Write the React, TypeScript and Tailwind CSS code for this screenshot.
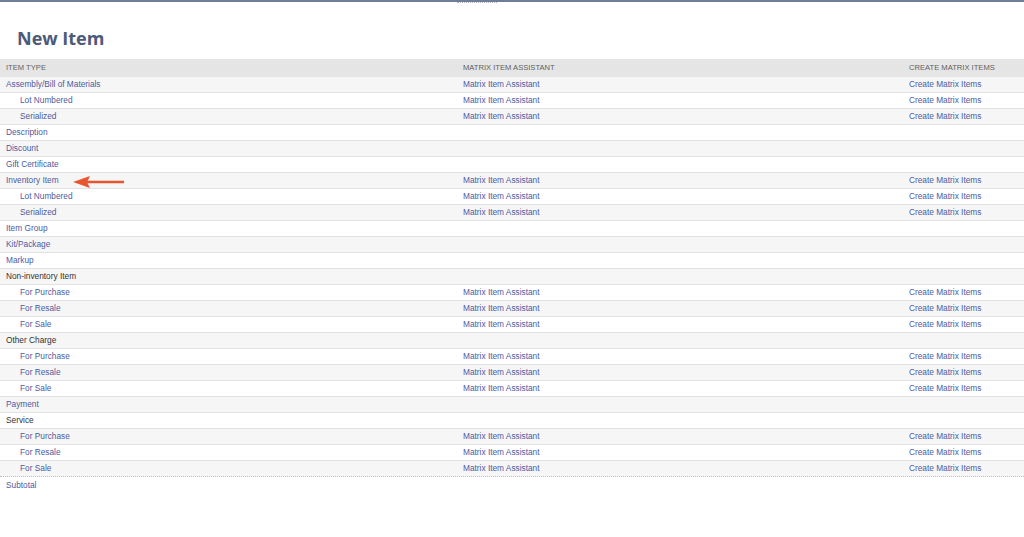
const rows: { label: string; indent?: boolean; link?: boolean; matrix?: boolean; arrow?: boolean }[] = [
  { label: 'Assembly/Bill of Materials', link: true, matrix: true },
  { label: 'Lot Numbered', indent: true, link: true, matrix: true },
  { label: 'Serialized', indent: true, link: true, matrix: true },
  { label: 'Description', link: true },
  { label: 'Discount', link: true },
  { label: 'Gift Certificate', link: true },
  { label: 'Inventory Item', link: true, matrix: true, arrow: true },
  { label: 'Lot Numbered', indent: true, link: true, matrix: true },
  { label: 'Serialized', indent: true, link: true, matrix: true },
  { label: 'Item Group', link: true },
  { label: 'Kit/Package', link: true },
  { label: 'Markup', link: true },
  { label: 'Non-inventory Item' },
  { label: 'For Purchase', indent: true, link: true, matrix: true },
  { label: 'For Resale', indent: true, link: true, matrix: true },
  { label: 'For Sale', indent: true, link: true, matrix: true },
  { label: 'Other Charge' },
  { label: 'For Purchase', indent: true, link: true, matrix: true },
  { label: 'For Resale', indent: true, link: true, matrix: true },
  { label: 'For Sale', indent: true, link: true, matrix: true },
  { label: 'Payment', link: true },
  { label: 'Service' },
  { label: 'For Purchase', indent: true, link: true, matrix: true },
  { label: 'For Resale', indent: true, link: true, matrix: true },
  { label: 'For Sale', indent: true, link: true, matrix: true },
  { label: 'Subtotal', link: true },
];

function Arrow() {
  return (
    <svg className="absolute left-[72px] top-[1px]" width="54" height="14" viewBox="0 0 54 14">
      <path d="M1 7 L18 1 L15 7 L18 13 Z" fill="#e8552f" />
      <line x1="15" y1="7" x2="52" y2="7" stroke="#e8552f" strokeWidth="2.6" />
    </svg>
  );
}

export default function App() {
  return (
    <div className="w-[1024px] h-[537px] bg-white font-['Liberation_Sans',Arial,sans-serif] overflow-hidden">
      <div className="relative h-[2px] bg-[#6f7d9b]">
        <div className="absolute left-[457px] top-[2px] w-[40px] h-px border-t border-dotted border-[#b5b5b5]" />
      </div>
      <h1 className="pl-[17px] pt-[24px] h-[57px] text-[18px] leading-[24px] font-bold text-[#4d5a7a] font-['Open_Sans',sans-serif]">
        New Item
      </h1>
      <div className="grid grid-cols-[457px_446px_1fr] h-[18px] items-center bg-[#e5e5e5] text-[7.6px] text-[#5f5f5f] uppercase">
        <div className="pl-[6px]">Item Type</div>
        <div className="pl-[6px]">Matrix Item Assistant</div>
        <div className="pl-[6px]">Create Matrix Items</div>
      </div>
      {rows.map((r, i) => (
        <div
          key={i}
          className={`grid grid-cols-[457px_446px_1fr] h-[16px] items-center text-[8.3px] ${
            i % 2 === 0 ? 'bg-[#f6f6f6]' : 'bg-white'
          } ${i === rows.length - 2 ? 'border-b border-dotted border-[#bdbdbd]' : i === rows.length - 1 ? '' : 'border-b border-[#e2e2e2]'}`}
        >
          <div className={`relative ${r.indent ? 'pl-[20px]' : 'pl-[6px]'} ${r.link ? 'text-[#4b5ba3]' : 'text-[#333]'}`}>
            {r.label}
            {r.arrow && <Arrow />}
          </div>
          <div className="pl-[6px] text-[#4b5ba3]">{r.matrix ? 'Matrix Item Assistant' : ''}</div>
          <div className="pl-[6px] text-[#4b5ba3]">{r.matrix ? 'Create Matrix Items' : ''}</div>
        </div>
      ))}
    </div>
  );
}
